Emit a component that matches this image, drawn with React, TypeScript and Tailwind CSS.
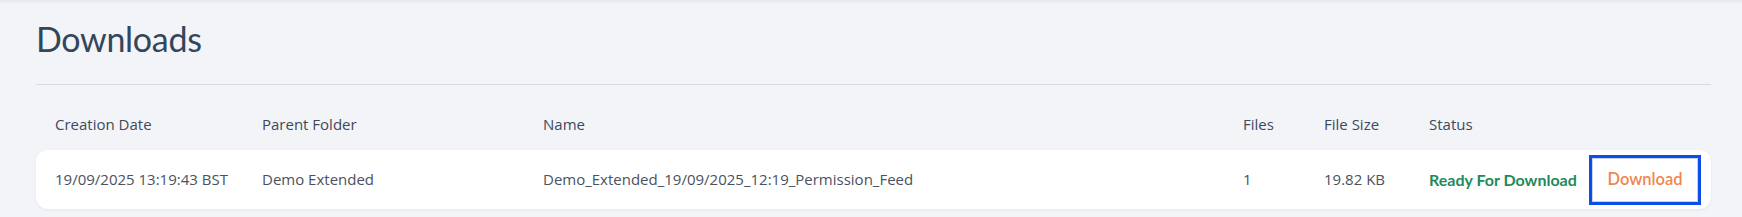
import React from "react";

const cols = [
  { key: "date", label: "Creation Date", w: "w-[207px]" },
  { key: "folder", label: "Parent Folder", w: "w-[281px]" },
  { key: "name", label: "Name", w: "w-[700px]" },
  { key: "files", label: "Files", w: "w-[81px]" },
  { key: "size", label: "File Size", w: "w-[105px]" },
  { key: "status", label: "Status", w: "w-[160px]" },
];

export default function App() {
  return (
    <div
      className="relative w-full h-[217px] bg-[#f3f4f8] overflow-hidden pl-[36px] pr-[31px]"
      style={{ fontFamily: '"Open Sans", "Noto Sans", sans-serif' }}
    >
      <div className="absolute inset-x-0 top-0 h-[4px] bg-gradient-to-b from-[#e6e7ec] to-[#f3f4f8]" />
      <h1
        className="pt-[15px] h-[84px] text-[34px] leading-[48px] text-[#34465a] tracking-[-0.3px]"
        style={{ fontFamily: 'Lato, "Noto Sans", sans-serif' }}
      >
        Downloads
      </h1>
      <div className="h-px bg-[#d6d9df]" />
      <div className="flex items-center h-[65px] pt-[14px] pl-[19px] text-[15px] text-[#3e4a5b]">
        {cols.map((c) => (
          <div key={c.key} className={c.w}>
            {c.label}
          </div>
        ))}
      </div>
      <div className="flex items-center h-[59px] bg-white rounded-[12px] shadow-[0_1px_3px_rgba(0,0,0,0.06)] pl-[19px] text-[15px] text-[#4a5261]">
        <div className="w-[207px]">19/09/2025 13:19:43 BST</div>
        <div className="w-[281px]">Demo Extended</div>
        <div className="w-[700px]">Demo_Extended_19/09/2025_12:19_Permission_Feed</div>
        <div className="w-[81px]">1</div>
        <div className="w-[105px]">19.82 KB</div>
        <div
          className="w-[160px] font-bold text-[#1f8a5b] text-[16px] whitespace-nowrap"
          style={{ fontFamily: 'Lato, "Noto Sans", sans-serif' }}
        >
          Ready For Download
        </div>
        <button
          className="w-[112px] h-[50px] border-[3px] border-[#0b4fe8] bg-white flex items-center justify-center"
          style={{ fontFamily: 'Lato, "Noto Sans", sans-serif' }}
        >
          <span className="w-full h-full border border-[#c8d2e8] flex items-center justify-center text-[#f0874f] text-[16.5px] font-semibold">
            Download
          </span>
        </button>
      </div>
    </div>
  );
}
